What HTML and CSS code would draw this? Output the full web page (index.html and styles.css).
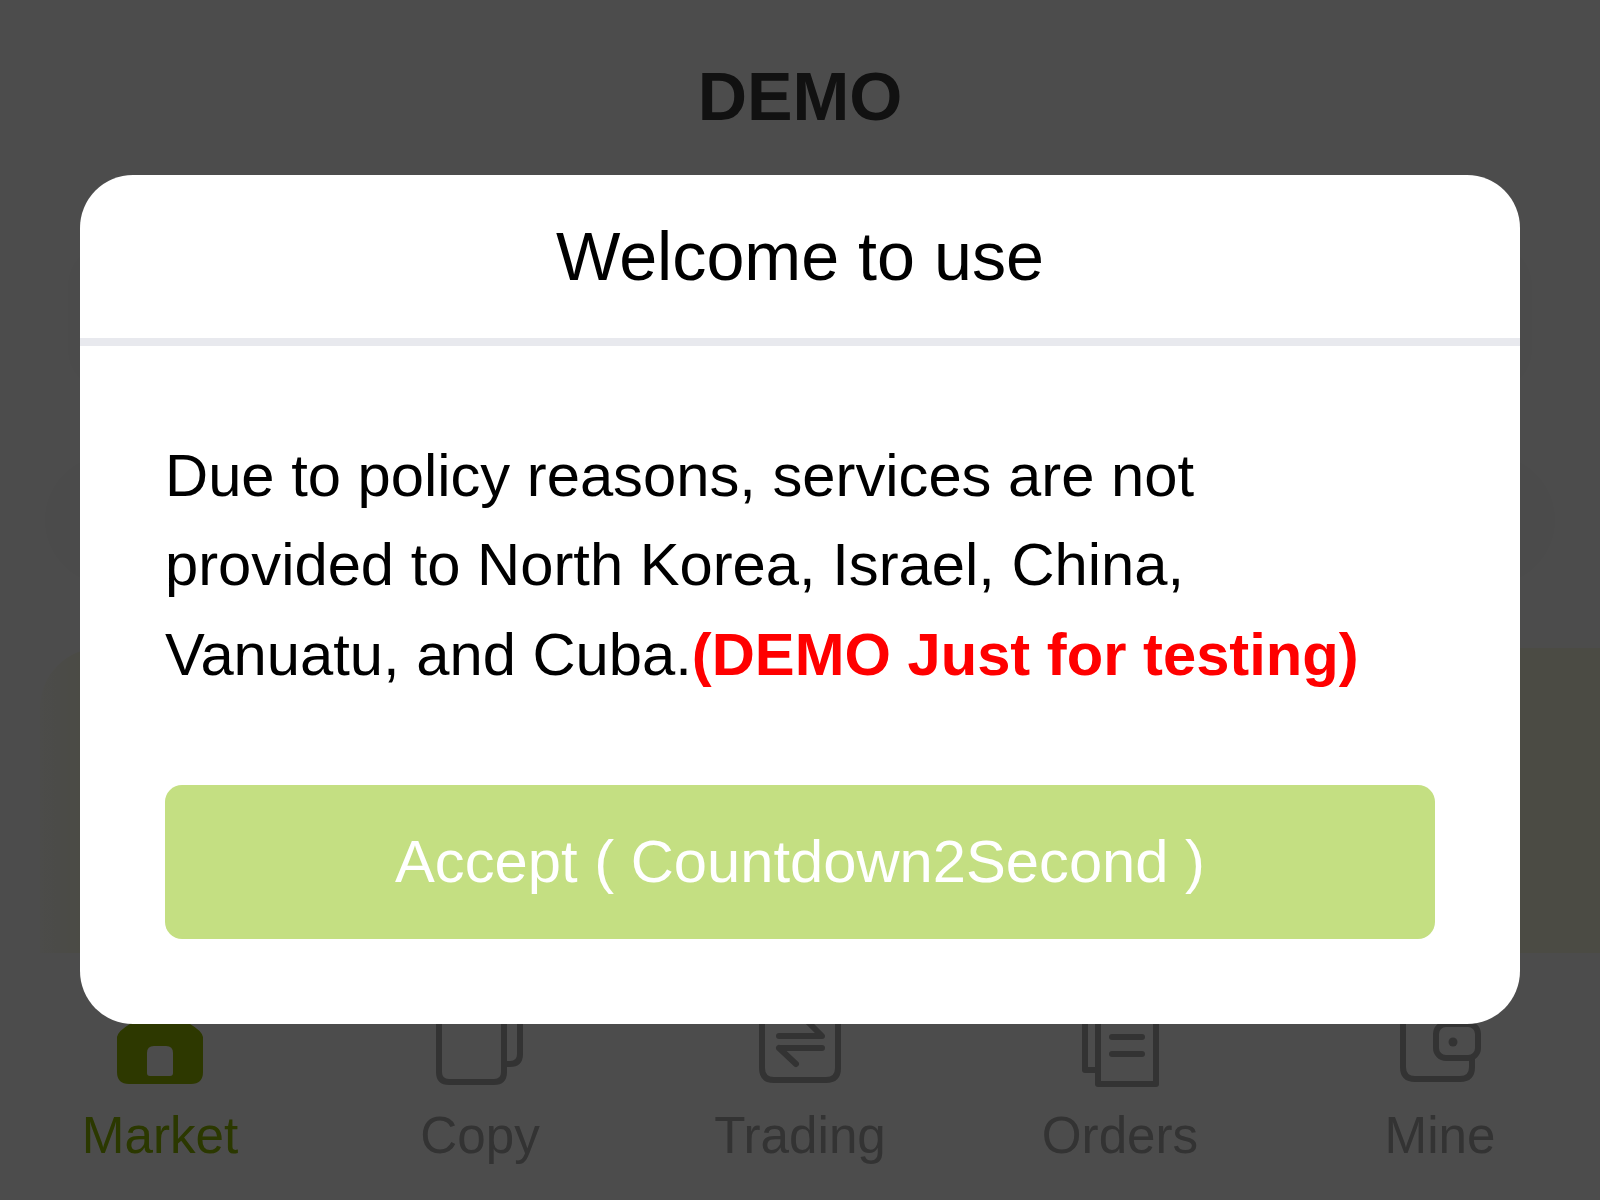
FILE: index.html
```html
<!DOCTYPE html>
<html lang="en">
<head>
<meta charset="utf-8">
<title>DEMO</title>
<link rel="stylesheet" href="styles.css">
</head>
<body>
<div class="page">
  <header class="header">DEMO</header>
  <div class="card-top"></div>
  <div class="search-pill"></div>
  <div class="banner"></div>
  <nav class="tabbar">
    <div class="tab tab-active">
      <svg class="tab-icon" viewBox="0 0 100 100"><path class="icon-fill" fill-rule="evenodd" d="M50 5 L20 34 Q8 41 7 47 V82 Q7 94 19 94 H81 Q93 94 93 82 V47 Q92 41 80 34 Z M44 56 H56 Q63 56 63 63 V83 Q63 86 60 86 H40 Q37 86 37 83 V63 Q37 56 44 56 Z"/></svg>
      <span class="tab-label">Market</span>
    </div>
    <div class="tab">
      <svg class="tab-icon" viewBox="0 0 100 100"><path class="icon-line" d="M9 10 V82 Q9 92 19 92 H64 Q74 92 74 82 V10 Z M74 74 H80 Q90 74 90 64 V10"/></svg>
      <span class="tab-label">Copy</span>
    </div>
    <div class="tab">
      <svg class="tab-icon" viewBox="0 0 100 100"><path class="icon-line" d="M12 10 V78 Q12 90 24 90 H76 Q88 90 88 78 V10 Z"/><path class="icon-line" d="M29 46 H72 L56 30 M29 58 H72 M29 58 L46 74"/></svg>
      <span class="tab-label">Trading</span>
    </div>
    <div class="tab">
      <svg class="tab-icon" viewBox="0 0 100 100"><path class="icon-line" d="M28 10 V94 H86 V10 Z M28 80 H15 V10"/><path class="icon-line" d="M42 47 H72 M42 64 H72"/></svg>
      <span class="tab-label">Orders</span>
    </div>
    <div class="tab">
      <svg class="tab-icon" viewBox="0 0 100 100"><path class="icon-line" d="M13 10 V77 Q13 89 25 89 H70 Q82 89 82 77 V68"/><rect class="icon-line" x="46" y="34" width="42" height="34" rx="10"/><circle class="icon-dot" cx="63" cy="52" r="4.5"/></svg>
      <span class="tab-label">Mine</span>
    </div>
  </nav>
</div>
<div class="overlay">
  <div class="modal">
    <div class="modal-title">Welcome to use</div>
    <div class="modal-body">
      <p class="modal-text">Due to policy reasons, services are not<br>provided to North Korea, Israel, China,<br>Vanuatu, and Cuba.<strong class="modal-note">(DEMO Just for testing)</strong></p>
      <button class="accept-btn" type="button">Accept ( Countdown2Second )</button>
    </div>
  </div>
</div>
</body>
</html>
```
FILE: styles.css
```css
* {
  box-sizing: border-box;
}

html,
body {
  margin: 0;
  height: 100%;
}

body {
  font-family: "Liberation Sans", Arial, sans-serif;
  background: #fff;
  overflow: hidden;
}

.page {
  height: 1200px;
  display: flex;
  flex-direction: column;
  background: #fff;
  overflow: hidden;
}

.header {
  height: 194px;
  padding-bottom: 2px;
  flex: none;
  display: flex;
  align-items: center;
  justify-content: center;
  font-size: 68.27px;
  font-weight: 700;
  color: #393939;
}

.card-top {
  flex: none;
  height: 145px;
  margin: 51px 68px 0;
  border-radius: 40px;
  background: #fafafa;
}

.search-pill {
  flex: none;
  height: 130px;
  margin: 65px 45px 0;
  border-radius: 65px;
  background: #fafafa;
}

.banner {
  flex: none;
  height: 305px;
  margin: 63px 0 0 40px;
  border-radius: 60px 0 0 0;
  background: linear-gradient(to right, #fdfdf8, #fafae3 50px);
}

.tabbar {
  flex: none;
  margin-top: auto;
  height: 210px;
  display: grid;
  grid-template-columns: repeat(5, 1fr);
}

.tab {
  display: flex;
  flex-direction: column;
  align-items: center;
  color: #aaa;
}

.tab-active {
  color: #90bb00;
}

.tab-icon {
  display: block;
  width: 100px;
  height: 100px;
  overflow: visible;
}

.icon-fill {
  fill: #96bb00;
}

.icon-line {
  fill: none;
  stroke: #aaa;
  stroke-width: 6;
  stroke-linecap: round;
  stroke-linejoin: round;
}

.icon-dot {
  fill: #aaa;
}

.tab-label {
  margin-top: 16px;
  font-size: 51.2px;
  line-height: 60px;
}

.overlay {
  position: fixed;
  inset: 0;
  padding-bottom: 1px;
  display: flex;
  align-items: center;
  justify-content: center;
  background: rgba(0, 0, 0, 0.7);
}

.modal {
  width: 1440px;
  border-radius: 53px;
  background: #fff;
  overflow: hidden;
}

.modal-title {
  height: 171px;
  padding-bottom: 2px;
  border-bottom: 8px solid #e8e9ee;
  display: flex;
  align-items: center;
  justify-content: center;
  font-size: 68.27px;
  color: #000;
}

.modal-body {
  padding: 84.5px 85px 85px;
}

.modal-text {
  margin: 0 0 85.5px;
  font-size: 59.73px;
  line-height: 89.6px;
  color: #000;
}

.modal-note {
  color: #f00;
  font-weight: 700;
}

.accept-btn {
  display: block;
  width: 100%;
  height: 154px;
  padding: 0 0 1px;
  border: 0;
  border-radius: 17px;
  background: #c4df82;
  color: #fff;
  font-family: inherit;
  font-size: 59.73px;
}
```
